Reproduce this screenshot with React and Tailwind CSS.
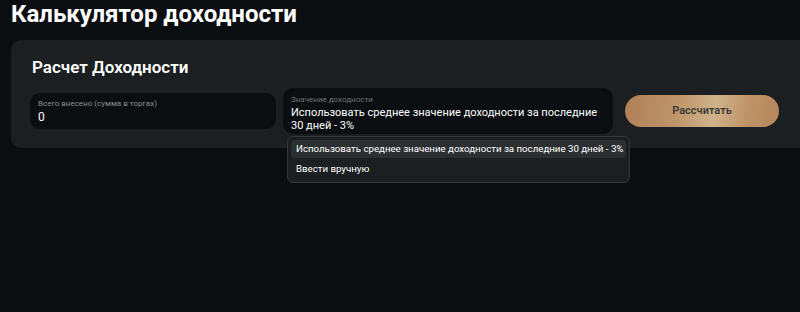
const App = () => {
  return (
    <div className="w-[800px] h-[312px] overflow-hidden bg-[#0b0e11] font-['Roboto',sans-serif]">
      <h1 className="pl-[11px] text-[24px] leading-[28px] font-bold text-white">Калькулятор доходности</h1>
      <div className="ml-[11px] mt-[12px] w-[800px] h-[108px] rounded-[10px] bg-[#1c1f21] pl-[19px] pt-[15px]">
        <h2 className="pl-[2px] text-[17px] leading-[24px] font-semibold text-white">Расчет Доходности</h2>
        <div className="mt-[9px] flex items-center">
          <div className="w-[246px] h-[36px] rounded-[10px] bg-[#0b0e10] px-[8px] pt-[6px]">
            <div className="text-[8px] leading-[10px] text-[#8a8d90]">Всего внесено (сумма в торгах)</div>
            <div className="text-[12px] leading-[16px] text-white">0</div>
          </div>
          <div className="relative ml-[7px] w-[330px] h-[46px] rounded-[10px] bg-[#0b0e10] px-[8px] pt-[7px]">
            <div className="text-[8px] leading-[10px] text-[#6f7275]">Значение доходности</div>
            <div className="mt-[1px] text-[11px] leading-[13px] text-white whitespace-nowrap">
              <div>Использовать среднее значение доходности за последние</div>
              <div>30 дней - 3%</div>
            </div>
            <div className="absolute left-[4px] top-[48px] w-[343px] h-[47px] rounded-[6px] border border-[#34373a] bg-[#1c1f21] p-[3px] z-10">
              <div className="h-[18px] rounded-[4px] bg-[#2c2f32] px-[5px] text-[9.7px] leading-[18px] text-white whitespace-nowrap">Использовать среднее значение доходности за последние 30 дней - 3%</div>
              <div className="mt-[2px] h-[18px] px-[5px] text-[9.7px] leading-[18px] text-white">Ввести вручную</div>
            </div>
          </div>
          <button className="ml-[12px] w-[154px] h-[32px] rounded-full bg-[linear-gradient(100deg,#b07f56_0%,#bf966c_35%,#cfb38b_58%,#c09469_78%,#b5845b_100%)] text-[11px] font-semibold text-[#3b3a38]">Рассчитать</button>
        </div>
      </div>
    </div>
  )
}
export default App
